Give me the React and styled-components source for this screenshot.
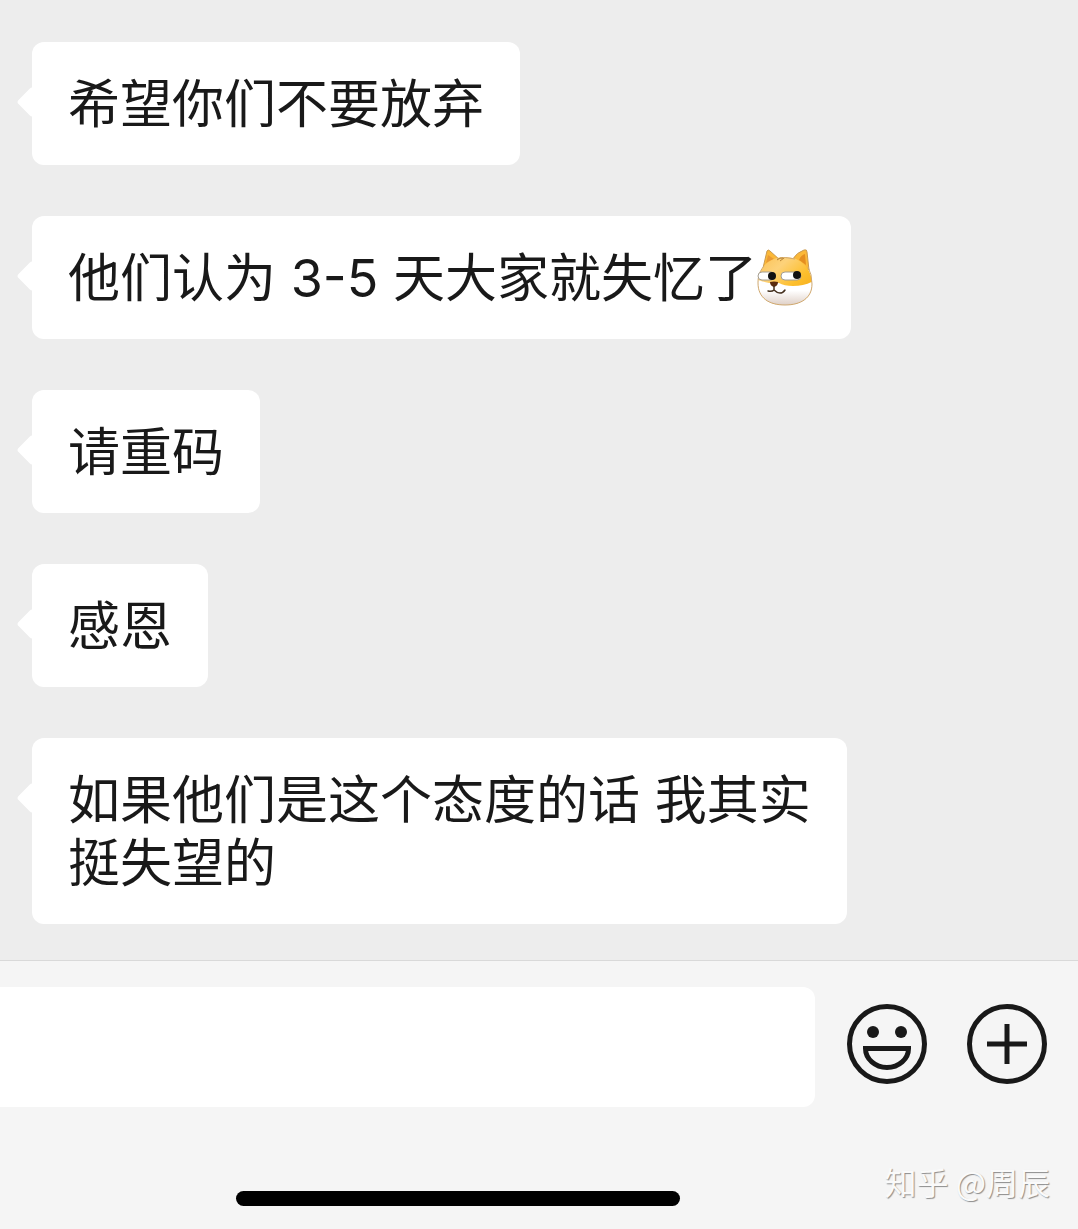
import React from 'react';
import styled, { createGlobalStyle } from 'styled-components';

const GlobalStyle = createGlobalStyle`
    * {
        box-sizing: border-box;
    }

    body {
        margin: 0;
        background-color: #ededed;
        color: #191919;
        font-family: Inter, "Noto Sans CJK SC", sans-serif;
    }
`;

const StyledChatDiv = styled.div`
    min-height: 100vh;
    display: flex;
    flex-direction: column;
`;

const MessageList = styled.ul`
    flex: 1;
    margin: 0;
    padding: 42px 32px 36px;
    display: flex;
    flex-direction: column;
    align-items: flex-start;
    gap: 51px;
    list-style: none;
`;

const Bubble = styled.li`
    position: relative;
    padding: 31px 36px 29px;
    border-radius: 12px;
    background-color: #fff;
    font-size: 52px;
    line-height: 63px;
    white-space: pre-wrap;

    /* tail on the left side */
    &::before {
        content: '';
        position: absolute;
        top: 49px;
        left: -11px;
        width: 22px;
        height: 22px;
        border-radius: 3px;
        background-color: #fff;
        transform: rotate(45deg);
    }

    & > svg {
        width: 58px;
        height: 58px;
        vertical-align: -9px;
    }
`;

const Composer = styled.form`
    display: flex;
    align-items: center;
    gap: 40px;
    padding: 26px 31px 0 0;
    border-top: 1px solid #d9d9d9;
    background-color: #f5f5f5;
`;

const MessageInput = styled.input`
    flex: 1;
    min-width: 0;
    height: 120px;
    margin-right: -8px;
    padding: 0 36px;
    border: none;
    border-radius: 0 12px 12px 0;
    outline: none;
    background-color: #fff;
    color: inherit;
    font: inherit;
    font-size: 52px;
`;

const IconButton = styled.button`
    width: 80px;
    height: 80px;
    margin-bottom: 6px;
    padding: 0;
    border: none;
    background: none;
    color: #191919;
    cursor: pointer;

    & > svg {
        display: block;
        width: 100%;
        height: 100%;
        fill: none;
        stroke: currentColor;
        stroke-width: 5;
    }
`;

const Footer = styled.footer`
    height: 122px;
    display: flex;
    justify-content: space-between;
    align-items: flex-end;
    padding: 0 28px 23px 236px;
    background-color: #f5f5f5;
`;

const HomeIndicator = styled.div`
    width: 444px;
    height: 15px;
    border-radius: 8px;
    background-color: #000;
`;

const Watermark = styled.span`
    color: #fafafa;
    font-family: "Noto Sans CJK SC", sans-serif;
    font-size: 32px;
    line-height: 50px;
    white-space: nowrap;
    text-shadow: 1px 1px 1px #8c8c8c;
`;

const DogeIcon = () => (
    <svg viewBox="2 0 58 58" role="img" aria-label="doge">
        <defs>
            <linearGradient id="fur" x1="0" y1="0" x2="1" y2="1">
                <stop offset="0" stopColor="#fbc154" />
                <stop offset="0.3" stopColor="#fdd27a" />
                <stop offset="0.6" stopColor="#fdbf2d" />
                <stop offset="1" stopColor="#f0a312" />
            </linearGradient>
            <linearGradient id="muzzle" x1="0" y1="0" x2="0" y2="1">
                <stop offset="0.4" stopColor="#fff" />
                <stop offset="1" stopColor="#d8c6bb" />
            </linearGradient>
            <clipPath id="head">
                <path d="M30 9C46 9 57 21 57 36C57 50 46 57 30 57C14 57 3 50 3 35C3 20 14 9 30 9Z" />
            </clipPath>
        </defs>
        <path d="M8 20L12 3Q13 1 15 3L25 12Z" fill="#fbb838" stroke="#c99a52" />
        <path d="M11 15L13 7L19 11Z" fill="#e99a35" />
        <path d="M37 12Q42 4 49 2Q52 1 52 4L54 22Z" fill="#fbb838" stroke="#c99a52" />
        <path d="M44 12Q46 7 50 6L51 17Z" fill="#e58e20" />
        <path d="M30 9C46 9 57 21 57 36C57 50 46 57 30 57C14 57 3 50 3 35C3 20 14 9 30 9Z" fill="url(#fur)" />
        <g clipPath="url(#head)">
            <path d="M0 31Q8 34 14 35H24Q29 38 38 38Q50 38 60 32V60H0Z" fill="url(#muzzle)" />
        </g>
        <path d="M9 18C4 24 3 29 3 35C3 50 14 57 30 57C46 57 57 50 57 36Q57 26 53 19M22 11Q30 8 40 11" fill="none" stroke="#cfa973" />
        <path d="M22 12Q25 9 28 10M25 13L29 10" fill="none" stroke="#b98535" />
        <rect x="3" y="24" width="17" height="8" rx="4" fill="#fff" stroke="#a49d90" />
        <rect x="26" y="24" width="20" height="8" rx="4" fill="#fff" stroke="#a49d90" />
        <circle cx="17" cy="28" r="4" fill="#111" />
        <circle cx="42" cy="27" r="4" fill="#111" />
        <path d="M15 34Q19 33 23 34Q23 38 19 39Q15 38 15 34Z" fill="#5b2c10" />
        <path d="M19 38V42Q17 44 13 43M19 42Q22 45 25 45Q28 45 30 42" fill="none" stroke="#45311f" strokeWidth="1.5" strokeLinecap="round" />
    </svg>
);

const SmileIcon = () => (
    <svg viewBox="0 0 80 80" aria-hidden="true">
        <circle cx="40" cy="40" r="37.5" />
        <circle cx="26" cy="28" r="6" fill="currentColor" stroke="none" />
        <circle cx="54" cy="28" r="6" fill="currentColor" stroke="none" />
        <path d="M18.5 44.5H61.5A21.5 19 0 0 1 18.5 44.5Z" />
    </svg>
);

const PlusIcon = () => (
    <svg viewBox="0 0 80 80" aria-hidden="true">
        <circle cx="40" cy="40" r="37.5" />
        <path d="M20 40H60M40 20V60" />
    </svg>
);

const messages = [
    { id: 1, text: '希望你们不要放弃' },
    { id: 2, text: '他们认为 3-5 天大家就失忆了', doge: true },
    { id: 3, text: '请重码' },
    { id: 4, text: '感恩' },
    { id: 5, text: '如果他们是这个态度的话 我其实\n挺失望的' },
];

const App = () => {
    return (
        <StyledChatDiv>
            <GlobalStyle />
            <MessageList>
                {messages.map((message) => (
                    <Bubble key={message.id}>
                        {message.text}
                        {message.doge && <DogeIcon />}
                    </Bubble>
                ))}
            </MessageList>
            <Composer onSubmit={(e) => e.preventDefault()}>
                <MessageInput type="text" aria-label="消息" />
                <IconButton type="button" aria-label="表情">
                    <SmileIcon />
                </IconButton>
                <IconButton type="button" aria-label="更多">
                    <PlusIcon />
                </IconButton>
            </Composer>
            <Footer>
                <HomeIndicator />
                <Watermark>知乎 @周辰</Watermark>
            </Footer>
        </StyledChatDiv>
    );
};

export default App;
